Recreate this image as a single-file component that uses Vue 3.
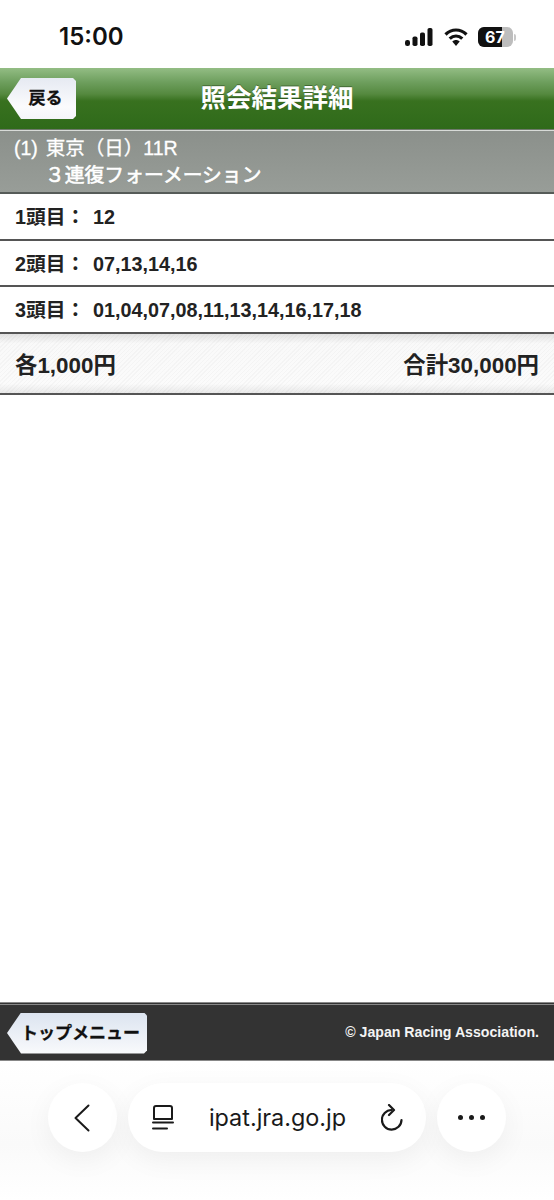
<script setup>
const rows = [
  { label: '1頭目：', value: '12' },
  { label: '2頭目：', value: '07,13,14,16' },
  { label: '3頭目：', value: '01,04,07,08,11,13,14,16,17,18' },
]
</script>

<template>
  <div class="page">
    <div class="status">
      <span class="time">15:00</span>
      <div class="status-icons">
        <svg class="signal" width="28" height="18" viewBox="0 0 28 18">
          <rect x="0" y="12" width="5" height="6" rx="2.2" fill="#111" />
          <rect x="7.500" y="8.500" width="5" height="9.500" rx="1.800" fill="#111" />
          <rect x="15" y="4.500" width="5" height="13.500" rx="1.800" fill="#111" />
          <rect x="22.500" y="0" width="5" height="18" rx="1.800" fill="#111" />
        </svg>
        <svg class="wifi" width="24" height="18" viewBox="0 0 24 18">
          <path d="M1.500 6.500C7.600 .500 16.400 .500 22.500 6.500" fill="none" stroke="#111" stroke-width="3.200" />
          <path d="M5.700 10.700C9.500 7.100 14.500 7.100 18.300 10.700" fill="none" stroke="#111" stroke-width="3.200" />
          <path d="M8.300 13.600C10.500 11.600 13.500 11.600 15.700 13.600L12 18Z" fill="#111" />
        </svg>
        <div class="battery"><div class="battery-fill"></div><span class="battery-num">67</span></div>
        <div class="battery-cap"></div>
      </div>
    </div>

    <header class="head">
      <div class="back-wrap"><button class="tag tag-back">戻る</button></div>
      <h1 class="title">照会結果詳細</h1>
    </header>

    <section class="race">
      <div class="race-line">(1) 東京（日）11R</div>
      <div class="race-type">３連復フォーメーション</div>
    </section>

    <div v-for="r in rows" :key="r.label" class="row">
      <span class="row-label">{{ r.label }}</span>
      <span>{{ r.value }}</span>
    </div>

    <div class="total">
      <span>各1,000円</span>
      <span>合計30,000円</span>
    </div>

    <div class="spacer"></div>

    <footer class="foot">
      <button class="tag tag-top">トップメニュー</button>
      <span class="copy">© Japan Racing Association.</span>
    </footer>

    <div class="browser">
      <div class="round">
        <svg width="16" height="28" viewBox="0 0 16 28">
          <path d="M14.500 1.500 1.500 14 14.500 26.500" fill="none" stroke="#1a1a1a" stroke-width="2" stroke-linecap="round" stroke-linejoin="round" />
        </svg>
      </div>
      <div class="url">
        <svg width="22" height="25" viewBox="0 0 22 25">
          <path d="M2 14V3A2 2 0 0 1 4 1H18A2 2 0 0 1 20 3V14Z" fill="none" stroke="#1a1a1a" stroke-width="2" stroke-linejoin="round" />
          <path d="M1 17.500H21" stroke="#1a1a1a" stroke-width="2" stroke-linecap="round" />
          <path d="M1 23.500H15" stroke="#1a1a1a" stroke-width="2" stroke-linecap="round" />
        </svg>
        <span class="url-text">ipat.jra.go.jp</span>
        <svg width="22" height="27" viewBox="0 0 22 27">
          <path d="M10.500 6A9.800 9.800 0 1 0 20.500 16" fill="none" stroke="#1a1a1a" stroke-width="2.200" stroke-linecap="round" />
          <path d="M8 1 13 6 8 11" fill="none" stroke="#1a1a1a" stroke-width="2.200" stroke-linecap="round" stroke-linejoin="round" />
        </svg>
      </div>
      <div class="round dots"><i></i><i></i><i></i></div>
    </div>
  </div>
</template>

<style>
html, body { margin: 0; background: #fff; }
</style>

<style scoped>
.page {
  width: 554px;
  height: 1200px;
  display: flex;
  flex-direction: column;
  overflow: hidden;
  background: #fff;
  font-family: "Liberation Sans", "Noto Sans CJK JP", sans-serif;
  color: #222;
}
.status {
  height: 68px;
  flex: none;
  display: flex;
  align-items: center;
  justify-content: space-between;
  padding: 6px 38px 0 59px;
  box-sizing: border-box;
}
.time {
  font-family: Inter, sans-serif;
  font-size: 24px;
  font-weight: 600;
  color: #111;
  margin-top: -1px;
}
.status-icons { display: flex; align-items: center; }
.signal { margin-right: 11px; }
.wifi { margin-right: 10px; }
.battery {
  position: relative;
  width: 35px;
  height: 20px;
  border-radius: 6px;
  background: #bdbdbd;
  overflow: hidden;
}
.battery-fill { width: 24px; height: 100%; background: #111; }
.battery-num {
  position: absolute;
  left: 7px;
  top: 0;
  line-height: 20px;
  font-family: Inter, sans-serif;
  font-size: 16px;
  font-weight: 700;
  color: #fff;
}
.battery-cap {
  width: 2px;
  height: 7px;
  margin-left: 1px;
  border-radius: 0 2px 2px 0;
  background: #c8c8c8;
}
.head {
  height: 62px;
  flex: none;
  box-sizing: border-box;
  display: flex;
  align-items: center;
  justify-content: center;
  position: relative;
  background: linear-gradient(#93bd84 0, #6e9f5e 14px, #55893f 26px, #38711f 33px, #2f6a1a 100%);
  border-bottom: 1px solid #6f7a6c;
}
.back-wrap { position: absolute; left: 7px; top: 10px; }
.tag {
  border: 0;
  padding: 0;
  display: block;
  height: 41px;
  font-family: "Liberation Sans", "Noto Sans CJK JP", sans-serif;
  font-weight: 700;
  font-size: 17px;
  color: #111;
  clip-path: polygon(14px 0, calc(100% - 3px) 0, 100% 3px, 100% calc(100% - 3px), calc(100% - 3px) 100%, 14px 100%, 0 50%);
}
.tag-back { width: 69px; padding-left: 8px; padding-bottom: 4px; -webkit-text-stroke: 0.3px #111; background: linear-gradient(#e6eaf2, #fbfbfd 70%, #f4f5f9); }
.tag-top { width: 140px; padding-left: 7px; padding-bottom: 4px; -webkit-text-stroke: 0.3px #111; background: linear-gradient(#dce4f0, #f9fafc); }
.title {
  margin: 0 0 6px;
  font-size: 25.500px;
  font-weight: 700;
  color: #fff;
  text-shadow: 0 -1px 0 rgba(30, 60, 20, 0.5);
}
.race {
  height: 64px;
  flex: none;
  box-sizing: border-box;
  padding: 4px 14px 0;
  background: linear-gradient(#8b908b, #989d98);
  border-top: 1px solid #d8dbd8;
  border-bottom: 2px solid #565b58;
  color: #fff;
  font-size: 19.500px;
  font-weight: 400;
  line-height: 27px;
  -webkit-text-stroke: 0.3px #fff;
}
.race-line { word-spacing: 2.500px; }
.race-type { padding-left: 31px; font-size: 19.800px; line-height: 27px; -webkit-text-stroke: 0.6px #fff; }
.row {
  height: 46.500px;
  flex: none;
  box-sizing: border-box;
  display: flex;
  align-items: baseline;
  padding: 7px 15px 0;
  background: #fff;
  border-bottom: 2px solid #555;
  font-size: 19.800px;
  font-weight: 700;
}
.row-label { width: 78px; }
.total {
  height: 61px;
  flex: none;
  box-sizing: border-box;
  display: flex;
  align-items: center;
  justify-content: space-between;
  padding: 0 15px;
  border-bottom: 2px solid #555;
  font-size: 22.400px;
  font-weight: 700;
  background:
    repeating-linear-gradient(135deg, rgba(0, 0, 0, 0.022) 0 1px, transparent 1px 3px),
    linear-gradient(#e2e2e2, #f9f9f9 16%, #fbfbfb 84%, #e9e9e9);
}
.spacer { flex: 1; }
.foot {
  height: 59px;
  flex: none;
  box-sizing: border-box;
  display: flex;
  align-items: center;
  justify-content: space-between;
  padding: 1px 15px 0 7px;
  background: #333;
  border-top: 3px double #888;
  border-bottom: 1px solid #888;
}
.copy { font-size: 14.150px; font-weight: 700; color: #f4f4f4; margin-bottom: 3px; }
.browser {
  height: 139px;
  flex: none;
  box-sizing: border-box;
  display: flex;
  gap: 11px;
  padding: 22px 48px 0;
  background: linear-gradient(#fff, #fafafa 60%, #fff);
}
.round, .url {
  height: 69px;
  background: #fff;
  display: flex;
  align-items: center;
  box-shadow: 0 8px 28px rgba(0, 0, 0, 0.05);
}
.round { width: 69px; border-radius: 50%; justify-content: center; padding-right: 1px; box-sizing: border-box; }
.url {
  width: 299px;
  border-radius: 35px;
  box-sizing: border-box;
  padding: 0 23px 0 24px;
  justify-content: space-between;
}
.url-text { font-family: Inter, sans-serif; font-size: 23.400px; color: #1a1a1a; margin-bottom: 1px; }
.dots { gap: 6px; padding-bottom: 1px; }
.dots i { width: 5px; height: 5px; border-radius: 50%; background: #1a1a1a; }
</style>
